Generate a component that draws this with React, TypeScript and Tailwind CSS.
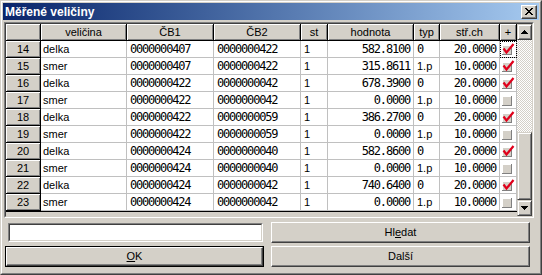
import React from 'react';

const sans = "font-['Liberation_Sans',Arial,sans-serif] text-[11px] leading-none text-black";
const mono = "font-['DejaVu_Sans_Mono',monospace] text-[12px] tracking-[-1.2px] leading-none text-black";

type Row = { n: number; name: string; cb1: string; cb2: string; val: string; typ: string; ch: string; on: boolean };

const rows: Row[] = [
  { n: 14, name: 'delka', cb1: '0000000407', cb2: '0000000422', val: '582.8100', typ: '0', ch: '20.0000', on: true },
  { n: 15, name: 'smer', cb1: '0000000407', cb2: '0000000422', val: '315.8611', typ: '1.p', ch: '10.0000', on: true },
  { n: 16, name: 'delka', cb1: '0000000422', cb2: '0000000042', val: '678.3900', typ: '0', ch: '20.0000', on: true },
  { n: 17, name: 'smer', cb1: '0000000422', cb2: '0000000042', val: '0.0000', typ: '1.p', ch: '10.0000', on: false },
  { n: 18, name: 'delka', cb1: '0000000422', cb2: '0000000059', val: '386.2700', typ: '0', ch: '20.0000', on: true },
  { n: 19, name: 'smer', cb1: '0000000422', cb2: '0000000059', val: '0.0000', typ: '1.p', ch: '10.0000', on: false },
  { n: 20, name: 'delka', cb1: '0000000424', cb2: '0000000040', val: '582.8600', typ: '0', ch: '20.0000', on: true },
  { n: 21, name: 'smer', cb1: '0000000424', cb2: '0000000040', val: '0.0000', typ: '1.p', ch: '10.0000', on: false },
  { n: 22, name: 'delka', cb1: '0000000424', cb2: '0000000042', val: '740.6400', typ: '0', ch: '20.0000', on: true },
  { n: 23, name: 'smer', cb1: '0000000424', cb2: '0000000042', val: '0.0000', typ: '1.p', ch: '10.0000', on: false },
];

// fixed (header / row number) cell look
const fixed = 'bg-[#d4d0c8] border-r border-b border-black shadow-[inset_1px_1px_0_#fff,inset_-1px_-1px_0_#808080] flex items-center justify-center';
const cell = 'h-[17px] border-r border-b border-[#c0c0c0] bg-white flex items-center overflow-hidden whitespace-nowrap';
const raisedBtn = 'bg-[#d4d0c8] border border-t-white border-l-white border-r-[#404040] border-b-[#404040] shadow-[inset_-1px_-1px_0_#808080]';

const CheckBox = ({ on }: { on: boolean }) => (
  <svg width="16" height="16" viewBox="0 0 16 16" shapeRendering="crispEdges">
    <rect x="2" y="4" width="10" height="10" fill="#d4d0c8" />
    <rect x="2" y="4" width="10" height="1" fill="#fff" />
    <rect x="2" y="4" width="1" height="10" fill="#fff" />
    <rect x="2" y="13" width="10" height="1" fill="#808080" />
    <rect x="11" y="4" width="1" height="10" fill="#808080" />
    {on && (
      <path d="M3.5 7.5 L6.5 11.5 L13.5 3" stroke="#e0001b" strokeWidth="2.2" fill="none" shapeRendering="auto" />
    )}
  </svg>
);

const ScrollBtn = ({ up }: { up: boolean }) => (
  <div className="h-[16px] bg-[#d4d0c8] border border-t-[#d4d0c8] border-l-[#d4d0c8] border-r-[#404040] border-b-[#404040] shadow-[inset_1px_1px_0_#fff,inset_-1px_-1px_0_#808080] flex items-center justify-center">
    <svg width="7" height="4" viewBox="0 0 7 4" shapeRendering="crispEdges">
      {up ? <path d="M3 0h1v1h1v1h1v1h1v1H0V3h1V2h1V1h1z" fill="#000" /> : <path d="M0 0h7v1H6v1H5v1H4v1H3V3H2V2H1V1H0z" fill="#000" />}
    </svg>
  </div>
);

export default function App() {
  const heads = [
    { t: 'veličina', w: 'w-[86px]' },
    { t: 'ČB1', w: 'w-[87px]' },
    { t: 'ČB2', w: 'w-[87px]' },
    { t: 'st', w: 'w-[27px]' },
    { t: 'hodnota', w: 'w-[86px]' },
    { t: 'typ', w: 'w-[26px]' },
    { t: 'stř.ch', w: 'w-[60px]' },
    { t: '+', w: 'w-[17px]' },
  ];

  return (
    <div className="w-[542px] h-[275px] bg-[#d4d0c8] border border-t-[#d4d0c8] border-l-[#d4d0c8] border-r-[#404040] border-b-[#404040] overflow-hidden">
      <div className="h-full border border-t-white border-l-white border-r-[#808080] border-b-[#808080] p-[1px] flex flex-col">
        {/* Title bar */}
        <div className="h-[17px] shrink-0 bg-linear-to-r from-[#0a246a] to-[#a6caf0] flex items-center justify-between pl-[2px] pr-[2px]">
          <span className="font-['Liberation_Sans',Arial,sans-serif] text-[12px] font-bold text-white leading-none">Měřené veličiny</span>
          <div className="w-[16px] h-[14px] bg-[#d4d0c8] border border-t-white border-l-white border-r-[#404040] border-b-[#404040] shadow-[inset_-1px_-1px_0_#808080] flex items-center justify-center">
            <svg width="8" height="7" viewBox="0 0 8 7" shapeRendering="crispEdges">
              <path d="M0 0h2v1h1v1h2V1h1V0h2v1H7v1H6v1H5v1h1v1h1v1h1v1H6V6H5V5H3v1H2v1H0V6h1V5h1V4h1V3H2V2H1V1H0z" fill="#000" />
            </svg>
          </div>
        </div>

        {/* Grid */}
        <div className="mt-[2px] ml-[1px] w-[530px] h-[196px] shrink-0 border border-t-[#808080] border-l-[#808080] border-r-white border-b-white">
          <div className="h-full border border-t-[#404040] border-l-[#404040] border-r-[#d4d0c8] border-b-[#d4d0c8] flex bg-[#d4d0c8]">
            <div className="w-[511px] flex flex-col">
              <div className={`flex ${sans}`}>
                <div className={`w-[35px] h-[17px] ${fixed}`} />
                {heads.map((h) => (
                  <div key={h.t} className={`${h.w} h-[17px] ${fixed}`}>{h.t}</div>
                ))}
              </div>
              {rows.map((r, i) => (
                <div key={r.n} className="flex">
                  <div className={`w-[35px] h-[17px] ${fixed} ${sans}`}>{r.n}</div>
                  <div className={`w-[86px] ${cell} pl-[2px] ${sans}`}>{r.name}</div>
                  <div className={`w-[87px] ${cell} pl-[3px] ${mono}`}>{r.cb1}</div>
                  <div className={`w-[87px] ${cell} pl-[3px] ${mono}`}>{r.cb2}</div>
                  <div className={`w-[27px] ${cell} pl-[3px] ${sans}`}>1</div>
                  <div className={`w-[86px] ${cell} justify-end pr-[3px] ${mono}`}>{r.val}</div>
                  <div className={`w-[26px] ${cell} pl-[3px] ${r.typ === '0' ? mono : sans}`}>{r.typ}</div>
                  <div className={`w-[60px] ${cell} justify-end pr-[3px] ${mono}`}>{r.ch}</div>
                  <div className={`w-[17px] ${cell} ${i === 0 ? 'outline-1 outline-dotted outline-black -outline-offset-1' : ''}`}>
                    <CheckBox on={r.on} />
                  </div>
                </div>
              ))}
              <div className="flex-1 border-t border-black" />
            </div>
            {/* Scrollbar */}
            <div className="w-[16px] flex flex-col">
              <ScrollBtn up />
              <div className="flex-1 flex flex-col justify-end bg-[repeating-conic-gradient(#d4d0c8_0%_25%,#ffffff_0%_50%)] bg-[length:2px_2px]">
                <div className="h-[68px] bg-[#d4d0c8] border border-t-[#d4d0c8] border-l-[#d4d0c8] border-r-[#404040] border-b-[#404040] shadow-[inset_1px_1px_0_#fff,inset_-1px_-1px_0_#808080]" />
              </div>
              <ScrollBtn up={false} />
            </div>
          </div>
        </div>

        {/* Bottom controls */}
        <div className={`mt-[4px] pl-[2px] flex flex-col gap-[3px] ${sans}`}>
          <div className="flex gap-[7px]">
            <div className="w-[259px] pl-[3px] pt-[1px]">
              <div className="w-[255px] h-[19px] border border-t-[#808080] border-l-[#808080] border-r-white border-b-white">
                <div className="h-full bg-white border border-t-[#404040] border-l-[#404040] border-r-[#d4d0c8] border-b-[#d4d0c8]" />
              </div>
            </div>
            <button className={`w-[259px] h-[21px] ${raisedBtn} flex items-center justify-center`}>
              <span>H<span>l</span><span className="underline">e</span>dat</span>
            </button>
          </div>
          <div className="flex gap-[7px]">
            <button className="w-[259px] h-[21px] border border-black bg-[#d4d0c8] flex">
              <span className="flex-1 flex items-center justify-center border border-t-white border-l-white border-r-[#404040] border-b-[#404040] shadow-[inset_-1px_-1px_0_#808080]">
                <span><span className="underline">O</span>K</span>
              </span>
            </button>
            <button className={`w-[259px] h-[21px] ${raisedBtn} flex items-center justify-center`}>Další</button>
          </div>
        </div>
      </div>
    </div>
  );
}
